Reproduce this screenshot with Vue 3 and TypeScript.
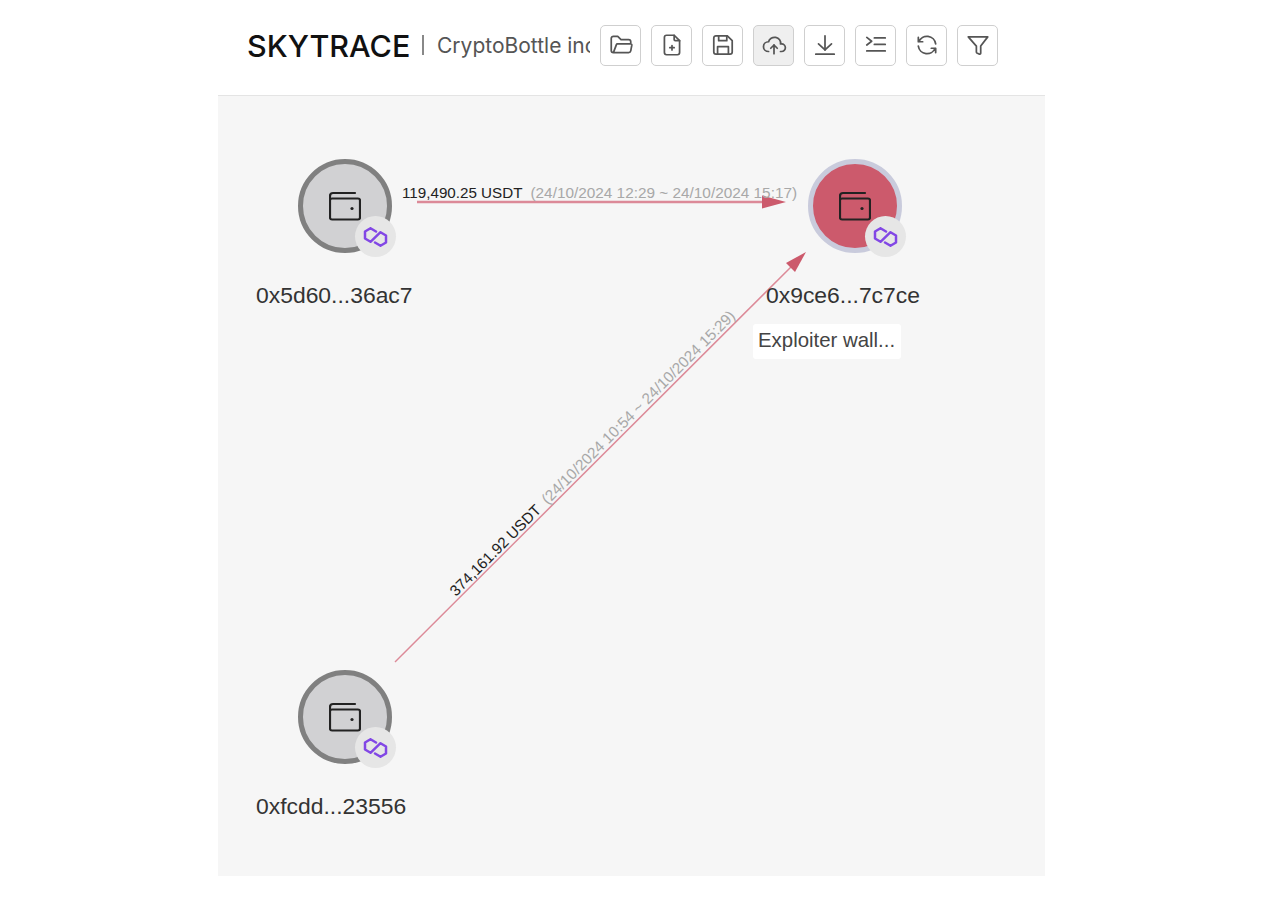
<template>
  <div class="app">
    <!-- header -->
    <header class="topbar">
      <div class="brand">
        <span class="logo">SKYTRACE</span>
        <span class="divider"></span>
        <span class="project">CryptoBottle inc</span>
      </div>
      <div class="tools">
        <button
          v-for="tool in tools"
          :key="tool.name"
          :class="['tool-btn', { active: tool.active }]"
          :title="tool.name"
        >
          <svg class="tool-icon" viewBox="0 0 24 24">
            <path v-for="d in tool.paths" :key="d" :d="d" />
          </svg>
        </button>
      </div>
    </header>

    <!-- graph -->
    <main class="canvas">
      <svg class="edges" viewBox="218 96 827 780">
        <g v-for="edge in edges" :key="edge.amount">
          <line class="edge-line" :x1="edge.x1" :y1="edge.y1" :x2="edge.x2" :y2="edge.y2" :stroke-width="edge.width" />
          <polygon class="edge-arrow" :points="edge.arrow" />
          <text class="edge-label" :x="edge.tx" :y="edge.ty" :transform="edge.rotate">
            <tspan class="amount">{{ edge.amount }}</tspan>
            <tspan class="range" dx="8">{{ edge.range }}</tspan>
          </text>
        </g>
      </svg>

      <div
        v-for="node in nodes"
        :key="node.address"
        class="node"
        :style="{ left: node.x - 218 + 'px', top: node.y - 96 + 'px' }"
      >
        <div :class="['circle', { flagged: node.flagged }]">
          <svg class="wallet" viewBox="0 0 32 32">
            <path d="M1 9V6a3 3 0 0 1 3-3h22" />
            <rect x="1" y="8.5" width="30" height="21" rx="2" />
            <circle class="dot" cx="23" cy="18.5" r="1.6" />
          </svg>
          <span class="chain">
            <svg class="polygon" viewBox="0 0 25 20">
              <path d="M13 4.5L7.5 1.2 2 4.5v7l5.5 3.3 10-9.6 5.5 3.3v7l-5.5 3.3-5.5-3.3" />
            </svg>
          </span>
        </div>
        <div class="address">{{ node.address }}</div>
        <div v-if="node.tag" class="tag">{{ node.tag }}</div>
      </div>
    </main>
  </div>
</template>

<script setup lang="ts">
interface Tool {
  name: string;
  paths: string[];
  active?: boolean;
}

const tools: Tool[] = [
  {
    name: "open",
    paths: [
      "M5 19l2.757-7.351a1 1 0 0 1 .936-.649h12.307a1 1 0 0 1 .986 1.164l-.996 5.211a2 2 0 0 1-1.964 1.625h-14.026a2 2 0 0 1-2-2v-11a2 2 0 0 1 2-2h4l3 3h7a2 2 0 0 1 2 2v2",
    ],
  },
  {
    name: "new",
    paths: [
      "M14 3v4a1 1 0 0 0 1 1h4",
      "M17 21h-10a2 2 0 0 1-2-2v-14a2 2 0 0 1 2-2h7l5 5v11a2 2 0 0 1-2 2z",
      "M12 12.5v4",
      "M10 14.5h4",
    ],
  },
  {
    name: "save",
    paths: [
      "M6 3.5h10l4.5 4.5v10.5a2 2 0 0 1-2 2h-13a2 2 0 0 1-2-2v-13a2 2 0 0 1 2-2z",
      "M8 3.5v4.5h7.5v-4.5",
      "M7 20.5v-7h10v7",
    ],
  },
  {
    name: "upload",
    active: true,
    paths: [
      "M7 18a4.6 4.4 0 0 1 0-9a5 4.5 0 0 1 11 2h1a3.5 3.5 0 0 1 0 7h-1",
      "M9 15l3-3l3 3",
      "M12 12v8",
    ],
  },
  {
    name: "download",
    paths: ["M12 3.5v13", "M6 11l6 5.5l6-5.5", "M3.5 20.5h17"],
  },
  {
    name: "indent",
    paths: ["M3.5 5l4.5 3.5l-4.5 3.5", "M10.5 5.5h10", "M10.5 11.5h10", "M3.5 17.5h17"],
  },
  {
    name: "refresh",
    paths: [
      "M20 11a8.1 8.1 0 0 0-15.5-2m-.5-4v4h4",
      "M4 13a8.1 8.1 0 0 0 15.5 2m.5 4v-4h-4",
    ],
  },
  {
    name: "filter",
    paths: ["M3 4.5h18l-6.5 8.5v6.5a1 1 0 0 1-1.5.8l-2-1a1 1 0 0 1-.5-.8v-5.5z"],
  },
];

const nodes = [
  { address: "0x5d60...36ac7", x: 298, y: 159, flagged: false, tag: "" },
  { address: "0x9ce6...7c7ce", x: 808, y: 159, flagged: true, tag: "Exploiter wall..." },
  { address: "0xfcdd...23556", x: 298, y: 670, flagged: false, tag: "" },
];

const edges = [
  {
    amount: "119,490.25 USDT",
    range: "(24/10/2024 12:29 ~ 24/10/2024 15:17)",
    x1: 417, y1: 202, x2: 770, y2: 202,
    width: 2.5,
    arrow: "786,202 762,195.5 762,208.5",
    tx: 402, ty: 198,
    rotate: "",
  },
  {
    amount: "374,161.92 USDT",
    range: "(24/10/2024 10:54 ~ 24/10/2024 15:29)",
    x1: 395, y1: 662, x2: 795, y2: 263,
    width: 1.5,
    arrow: "806,252 786,263 795,272",
    tx: 456, ty: 597,
    rotate: "rotate(-45 456 597)",
  },
];
</script>

<style scoped>
.app {
  width: 827px;
  margin-left: 218px;
  font-family: "Liberation Sans", Arial, sans-serif;
}

.topbar {
  display: flex;
  align-items: center;
  box-sizing: border-box;
  height: 96px;
  padding: 0 0 5px 29px;
  background: #fff;
  border-bottom: 1px solid #e4e4e4;
}

.brand {
  display: flex;
  align-items: center;
  width: 353px;
}

.logo {
  width: 164px;
  font-family: Inter, sans-serif;
  font-size: 30.5px;
  font-weight: 500;
  color: #111;
  white-space: nowrap;
}

.divider {
  width: 2px;
  height: 20px;
  margin: 0 13px 0 11px;
  background: #888;
}

.project {
  width: 153px;
  overflow: hidden;
  font-family: Inter, sans-serif;
  font-size: 21px;
  color: #555;
  white-space: nowrap;
}

.tools {
  display: flex;
  gap: 10px;
}

.tool-btn {
  display: flex;
  align-items: center;
  justify-content: center;
  width: 41px;
  height: 41px;
  padding: 0;
  background: #fff;
  border: 1.5px solid #cfcfcf;
  border-radius: 5px;
}

.tool-btn.active {
  background: #efefef;
}

.tool-icon {
  width: 26px;
  height: 26px;
  fill: none;
  stroke: #555;
  stroke-width: 1.6;
  stroke-linecap: round;
  stroke-linejoin: round;
}

.canvas {
  position: relative;
  height: 780px;
  overflow: hidden;
  background: #f6f6f6;
}

.edges {
  position: absolute;
  inset: 0;
  width: 827px;
  height: 780px;
}

.edge-line {
  stroke: #dc8a98;
}

.edge-arrow {
  fill: #cc5a6c;
}

.edge-label {
  font-size: 15.2px;
}

.amount {
  fill: #222;
}

.range {
  font-size: 15.35px;
  fill: #a8a8a8;
}

.node {
  position: absolute;
  width: 94px;
}

.circle {
  position: relative;
  display: flex;
  align-items: center;
  justify-content: center;
  box-sizing: border-box;
  width: 94px;
  height: 94px;
  background: #d1d1d3;
  border: 5px solid #808080;
  border-radius: 50%;
}

.circle.flagged {
  background: #cc5a6c;
  border-color: #c9cbdc;
}

.wallet {
  width: 32px;
  height: 32px;
  fill: none;
  stroke: #222;
  stroke-width: 2.2;
  stroke-linecap: round;
  stroke-linejoin: round;
}

.wallet .dot {
  fill: #222;
  stroke: none;
}

.chain {
  position: absolute;
  left: 52px;
  top: 52px;
  display: flex;
  align-items: center;
  justify-content: center;
  width: 41px;
  height: 41px;
  background: #e6e6e6;
  border-radius: 50%;
}

.polygon {
  width: 25px;
  height: 20px;
  fill: none;
  stroke: #8247e5;
  stroke-width: 2.5;
  stroke-linejoin: round;
  stroke-linecap: round;
}

.address {
  margin: 29px 0 0 -42px;
  font-size: 22.9px;
  line-height: 26px;
  color: #333;
  white-space: nowrap;
}

.tag {
  display: inline-block;
  box-sizing: border-box;
  width: 148px;
  margin: 16px 0 0 -55px;
  padding: 0 5px 3px;
  font-size: 20.4px;
  line-height: 32px;
  color: #444;
  white-space: nowrap;
  background: #fff;
  border-radius: 3px;
}
</style>

<style>
html,
body {
  background: #fff;
}
</style>
